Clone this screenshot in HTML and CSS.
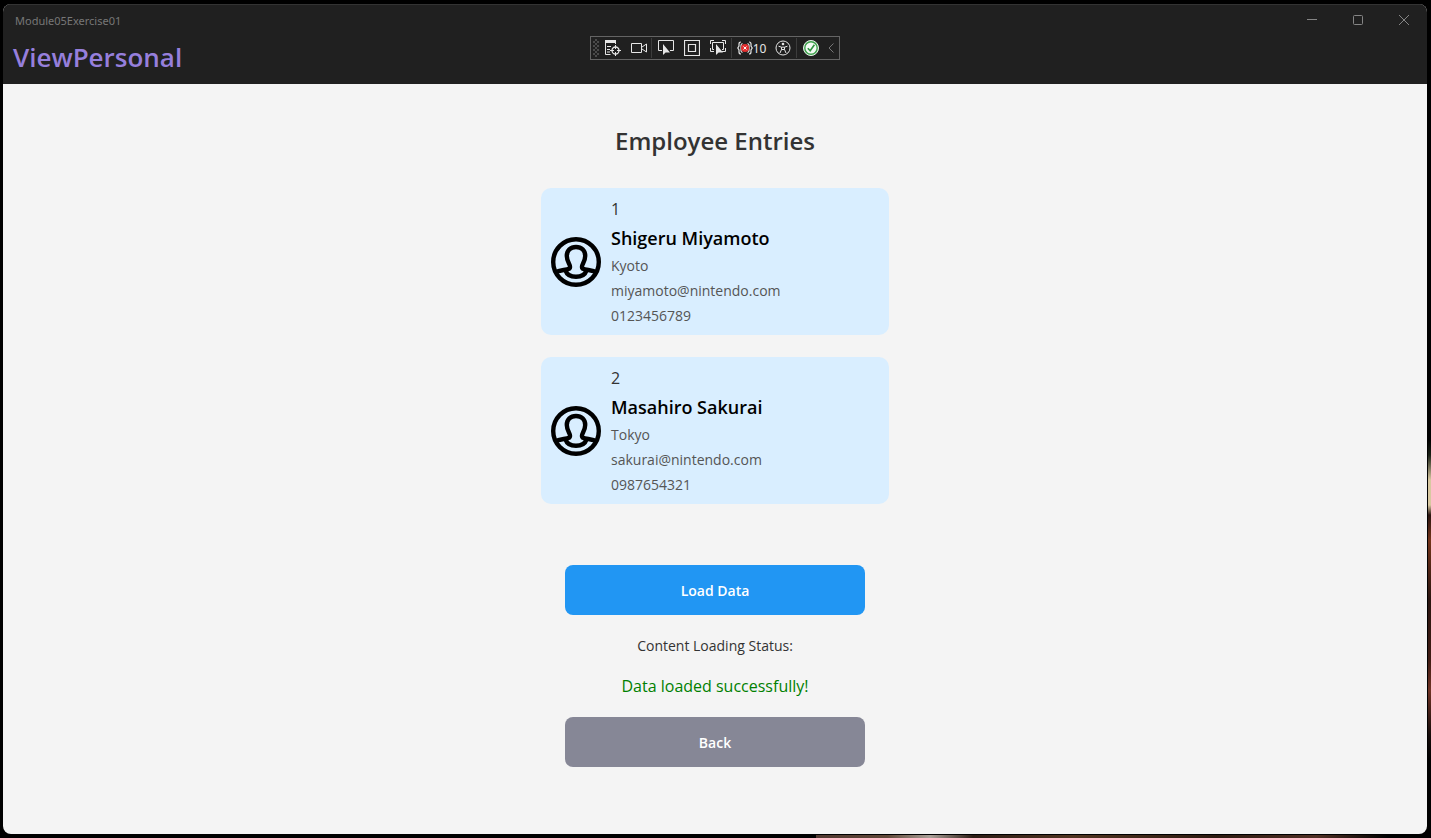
FILE: index.html
```html
<!DOCTYPE html>
<html lang="en">
<head>
<meta charset="utf-8">
<meta name="viewport" content="width=device-width, initial-scale=1">
<title>Module05Exercise01</title>
<link rel="stylesheet" href="styles.css">
</head>
<body class="desktop">
<div class="window">
  <header class="header">
    <div class="titlebar">
      <span class="app-name">Module05Exercise01</span>
      <div class="captions">
        <button class="caption" type="button" aria-label="Minimize"><svg width="10" height="10" viewBox="0 0 10 10"><path d="M0 4.500h10"/></svg></button>
        <button class="caption" type="button" aria-label="Maximize"><svg width="10" height="10" viewBox="0 0 10 10"><rect x=".5" y=".5" width="9" height="9" rx="1"/></svg></button>
        <button class="caption" type="button" aria-label="Close"><svg width="10" height="10" viewBox="0 0 10 10"><path d="M0 0l10 10M10 0L0 10"/></svg></button>
      </div>
    </div>
    <h1 class="page-title">ViewPersonal</h1>
    <div class="toolbar" role="toolbar" aria-label="Debug tools">
      <span class="grip"></span>
      <button class="tool" type="button" aria-label="Live visual tree"><svg width="16" height="16" viewBox="0 0 16 16"><path d="M0 0h11v3H0z" fill="#e6e6e6" stroke="none"/><path d="M.5 3v11.500h5M2 6.500h4M2 9.500h3M2 12h3M10.500 3v1"/><circle cx="10.500" cy="10.500" r="3.500" stroke-width="1.300"/><path d="M10.500 5v4M10.500 12v4M5 10.500h4M12 10.500h4"/></svg></button>
      <button class="tool tool-camera" type="button" aria-label="Camera"><svg width="16" height="16" viewBox="0 0 16 16"><path d="M.5 3.500h10v9H.5zM11 7l4.500-3v8L11 9"/></svg></button>
      <span class="separator"></span>
      <button class="tool" type="button" aria-label="Select element"><svg width="16" height="16" viewBox="0 0 16 16"><path d="M4 10.500H.5v-10h15v10H12"/><path d="M5 4v11l2.600-2.500H12z" fill="#e6e6e6" stroke="none"/></svg></button>
      <button class="tool" type="button" aria-label="Display layout adorners"><svg width="16" height="16" viewBox="0 0 16 16"><path d="M.5 .5h15v15H.5zM4.500 4.500h7v7h-7z" stroke-width="1.200"/></svg></button>
      <button class="tool" type="button" aria-label="Track focused element"><svg width="16" height="16" viewBox="0 0 16 16"><path d="M.5 4V.5H4M12 .5h3.500V4M.5 8v3.500H4M15.500 8v3.500H12M4 9.500H2.500v-7h11v7H12"/><path d="M6 4v11l2.600-2.500H13z" fill="#e6e6e6" stroke="none"/></svg></button>
      <span class="separator"></span>
      <button class="tool tool-count" type="button" aria-label="Binding failures: 10"><svg width="16" height="16" viewBox="0 0 16 16"><path d="M4 2Q2 2 2 4v2L.8 8 2 10v2q0 2 2 2M12 2q2 0 2 2v2l1.200 2L14 10v2q0 2-2 2M5.500 3.500Q4 4 4 5.500v5Q4 12 5.500 12.500M10.500 3.500Q12 4 12 5.500v5q0 1.500-1.500 2" stroke-width="1.200"/><circle cx="8" cy="8" r="4" fill="#e23030" stroke="none"/><path d="M6.500 6.500l3 3M9.500 6.500l-3 3" stroke="#fff"/></svg><span>10</span></button>
      <button class="tool" type="button" aria-label="Accessibility checker"><svg width="16" height="16" viewBox="0 0 16 16"><circle cx="8" cy="8" r="7"/><circle cx="8" cy="4" r="1.300" fill="#e6e6e6" stroke="none"/><path d="M3.500 6.200l3 1v2.300L5 13M12.500 6.200l-3 1v2.300L11 13M6.500 7.200h3M6.500 9.500h3"/></svg></button>
      <span class="separator"></span>
      <button class="tool tool-ready" type="button" aria-label="Hot reload available"><svg width="16" height="16" viewBox="0 0 16 16"><circle cx="8" cy="8" r="7.500" fill="#e4f3e6" stroke="#e4f3e6"/><circle cx="8" cy="8" r="6.200" fill="#f3faf4" stroke="#3da04b" stroke-width="1.400"/><path d="M4.800 8.200l2.400 2.600 4.200-6" stroke="#2f9440" stroke-width="1.600"/></svg></button>
      <button class="tool tool-slim" type="button" aria-label="Collapse toolbar"><svg width="6" height="10" viewBox="0 0 6 10"><path d="M5.500 .5L1 5l4.500 4.500" stroke="#777"/></svg></button>
    </div>
  </header>
  <main class="content">
    <h2 class="heading">Employee Entries</h2>
    <ul class="entries">
      <li class="card">
        <svg class="avatar" width="50" height="50" viewBox="0 0 50 50"><circle cx="25" cy="25" r="22.800"/><path d="M4 35.500C9 32.500 15 33.500 18.500 31.500C21 29 15.800 26 15.800 19C15.800 13.300 19.500 10 25 10s9.200 3.300 9.200 9C34.200 26 29 29 31.500 31.500C35 33.500 41 32.500 46 35.500"/><path d="M14.500 33.500c1.500 4.500 5.500 6.300 10.500 6.300s9-1.800 10.500-6.300"/></svg>
        <div class="details">
          <span class="number">1</span>
          <strong class="name">Shigeru Miyamoto</strong>
          <span class="info">Kyoto</span>
          <span class="info">miyamoto@nintendo.com</span>
          <span class="info">0123456789</span>
        </div>
      </li>
      <li class="card">
        <svg class="avatar" width="50" height="50" viewBox="0 0 50 50"><circle cx="25" cy="25" r="22.800"/><path d="M4 35.500C9 32.500 15 33.500 18.500 31.500C21 29 15.800 26 15.800 19C15.800 13.300 19.500 10 25 10s9.200 3.300 9.200 9C34.200 26 29 29 31.500 31.500C35 33.500 41 32.500 46 35.500"/><path d="M14.500 33.500c1.500 4.500 5.500 6.300 10.500 6.300s9-1.800 10.500-6.300"/></svg>
        <div class="details">
          <span class="number">2</span>
          <strong class="name">Masahiro Sakurai</strong>
          <span class="info">Tokyo</span>
          <span class="info">sakurai@nintendo.com</span>
          <span class="info">0987654321</span>
        </div>
      </li>
    </ul>
    <button class="button button-load" type="button">Load Data</button>
    <p class="status-label">Content Loading Status:</p>
    <p class="status" role="status">Data loaded successfully!</p>
    <button class="button button-back" type="button">Back</button>
  </main>
</div>
</body>
</html>
```

FILE: styles.css
```css
* {
  box-sizing: border-box;
}

.desktop {
  display: flex;
  min-height: 100vh;
  margin: 0;
  padding: 4px 4px 4px 3px;
  background:
    linear-gradient(#000 0 440px, #192015 455px, #d8c8a0 480px 505px, #2a1510 515px, #74351b 540px, #2a1510 600px, #401c14 660px, #703426 690px, #160c0a 735px, #000 760px) right top / 3px 100% no-repeat,
    linear-gradient(90deg, #000 0 57%, #503830 57%, #604838 62%, #aaa098 65%, #2c1c14 68%, #503420 75%, #2c1a10 85%, #503024 92%, #000 97%) left bottom / 100% 3px no-repeat,
    #000;
  font-family: "Open Sans", "Noto Sans", sans-serif;
  color: #333;
}

.window {
  display: flex;
  flex: 1;
  flex-direction: column;
  overflow: hidden;
  border-radius: 8px;
  background: #f4f4f4;
}

.header {
  position: relative;
  height: 80px;
  border-top: 1px solid #333;
  background: #202020;
}

.titlebar {
  display: flex;
  align-items: center;
  justify-content: space-between;
  height: 30px;
  padding-left: 12px;
}

.app-name {
  font-family: "Noto Sans", sans-serif;
  font-size: 11px;
  color: #777;
}

.captions {
  display: flex;
}

.caption {
  display: grid;
  place-items: center;
  width: 46px;
  height: 30px;
  padding: 0;
  border: 0;
  background: none;
}

svg {
  flex: none;
  fill: none;
}

.caption svg {
  stroke: #858585;
}

.page-title {
  margin: 0;
  padding-left: 10px;
  font-size: 26px;
  font-weight: 600;
  line-height: 44px;
  color: #967fdc;
}

.toolbar {
  position: absolute;
  top: 31px;
  left: 50%;
  display: flex;
  align-items: center;
  width: 250px;
  height: 24px;
  margin-left: -125px;
  border: 1px solid #646464;
}

.grip {
  width: 6px;
  height: 18px;
  margin: 0 1px 0 2px;
  background: repeating-conic-gradient(#4a4a4a 0 25%, transparent 0 50%) 0 0 / 4px 4px;
}

.tool {
  display: flex;
  flex: none;
  align-items: center;
  justify-content: center;
  width: 26px;
  height: 22px;
  padding: 0;
  border: 0;
  background: none;
  font-family: "Noto Sans", sans-serif;
  font-size: 12px;
  color: #e6e6e6;
}

.tool svg {
  stroke: #e6e6e6;
}

.tool-camera {
  width: 25px;
}

.tool-count {
  width: 37px;
}

.tool-ready {
  width: 25px;
}

.tool-slim {
  width: 16px;
}

.separator {
  flex: none;
  width: 1px;
  height: 20px;
  margin-right: 1px;
  background: #3c3c3c;
}

.content {
  display: flex;
  flex: 1;
  flex-direction: column;
  align-items: center;
  padding: 40px 20px;
}

.heading {
  margin: 0;
  font-size: 24px;
  font-weight: 600;
  line-height: 34px;
}

.entries {
  display: flex;
  flex-direction: column;
  gap: 22px;
  width: 100%;
  max-width: 348px;
  margin: 30px 0 61px;
  padding: 0;
  list-style: none;
}

.card {
  display: flex;
  align-items: center;
  gap: 10px;
  padding: 10px 10px 9px;
  border-radius: 10px;
  background: #d9eeff;
}

.avatar {
  stroke: #000;
  stroke-width: 4.400;
}

.details {
  display: flex;
  flex-direction: column;
  gap: 5px;
}

.number {
  font-size: 16px;
  line-height: 22px;
}

.name {
  font-size: 18px;
  font-weight: 600;
  line-height: 26px;
  color: #000;
}

.info {
  font-size: 14px;
  line-height: 20px;
  color: #555;
}

.button {
  width: 100%;
  max-width: 300px;
  height: 50px;
  border: 0;
  border-radius: 8px;
  font-family: inherit;
  font-size: 14px;
  font-weight: 600;
  color: #fff;
}

.button-load {
  background: #2196f3;
}

.button-back {
  background: #868796;
}

.status-label {
  margin: 21px 0 19px;
  font-size: 14px;
  line-height: 20px;
}

.status {
  margin: 0 0 20px;
  font-size: 16px;
  line-height: 22px;
  color: #008000;
}
```
